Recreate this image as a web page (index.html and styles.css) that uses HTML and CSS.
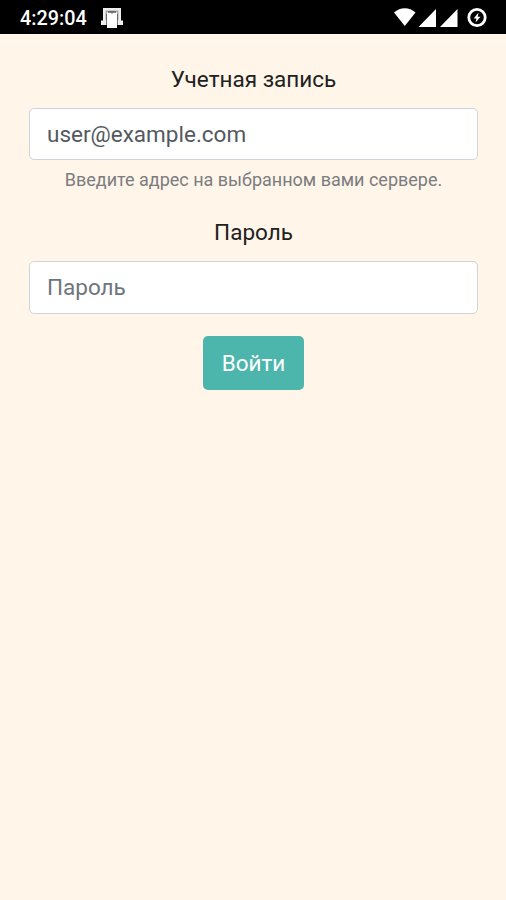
FILE: index.html
```html
<!DOCTYPE html>
<html lang="ru">
<head>
<meta charset="utf-8">
<title>Вход</title>
<link rel="stylesheet" href="styles.css">
</head>
<body>
<header class="status">
  <span class="clock">4:29:04</span>
  <svg class="notice" width="22" height="22" viewBox="0 0 22 22">
    <path d="M2 1H20V13.500H22V18H16V21H6V18H0V13.500H2Z" fill="#eee"/>
    <path d="M4.500 3.500H17.500V13H16V5.500H6V13H4.500Z" fill="#aaa"/>
    <path d="M6 5.500H16V21H6Z" fill="#fff"/>
    <path d="M7 5H15" stroke="#444" stroke-width="1.200"/>
    <path d="M11 5V7" stroke="#777" stroke-width="1"/>
    <path d="M5.500 7V18M16.500 7V18" stroke="#555" stroke-width=".8"/>
  </svg>
  <svg class="signals" width="94" height="22" viewBox="0 0 94 22" fill="#fff">
    <path d="M0 5.500C6-.2 15.500-.2 21.500 5.500L10.800 19Z"/>
    <path d="M42 2V20H24.500Z"/>
    <path d="M63.500 2V20H46Z"/>
    <circle cx="83" cy="10.500" r="8.200" fill="none" stroke="#fff" stroke-width="2.800"/>
    <path d="M84.600 5.600L79.700 11.400H82.400L81.500 15.500L86.500 9.700H83.700Z"/>
  </svg>
</header>
<form class="login">
  <label class="label" for="account">Учетная запись</label>
  <input class="field" id="account" type="email" placeholder="user@example.com">
  <small class="hint">Введите адрес на выбранном вами сервере.</small>
  <label class="label" for="password">Пароль</label>
  <input class="field field-password" id="password" type="password" placeholder="Пароль">
  <button class="submit" type="button">Войти</button>
</form>
</body>
</html>
```
FILE: styles.css
```css
* {
  box-sizing: border-box;
}

body {
  margin: 0;
  min-height: 900px;
  background: #fff5e8;
  color: #212121;
  font-family: Roboto, sans-serif;
  font-size: 22.5px;
}

.status {
  display: flex;
  align-items: center;
  height: 34px;
  padding: 1px 18px 0 20px;
  background: #000;
  color: #fff;
}

.clock {
  width: 81px;
  padding-top: 2px;
  font-size: 19.8px;
  font-weight: 500;
  line-height: 32px;
  white-space: nowrap;
}

.signals {
  margin-left: auto;
}

.login {
  display: flex;
  flex-direction: column;
  align-items: center;
  padding: 28px 28px 0 29px;
}

.label {
  height: 34px;
  line-height: 34px;
  margin-bottom: 12px;
}

.field {
  width: 100%;
  height: 52px;
  padding: 0 17px;
  border: 1px solid #ced4da;
  border-radius: 5px;
  background: #fff;
  color: #495057;
  font: inherit;
}

.field::placeholder {
  color: #53595f;
  opacity: 1;
}

.field-password {
  height: 53px;
  padding-bottom: 1px;
}

.field-password::placeholder {
  color: #6c757d;
}

.hint {
  height: 27px;
  margin: 6px 0 22px;
  color: #7b7c80;
  font-size: 18px;
  line-height: 27px;
  white-space: nowrap;
}

.submit {
  width: 101px;
  height: 54px;
  margin-top: 22px;
  padding: 0;
  border: 0;
  border-radius: 5px;
  background: #4db6ac;
  color: #fff;
  font: inherit;
}
```
